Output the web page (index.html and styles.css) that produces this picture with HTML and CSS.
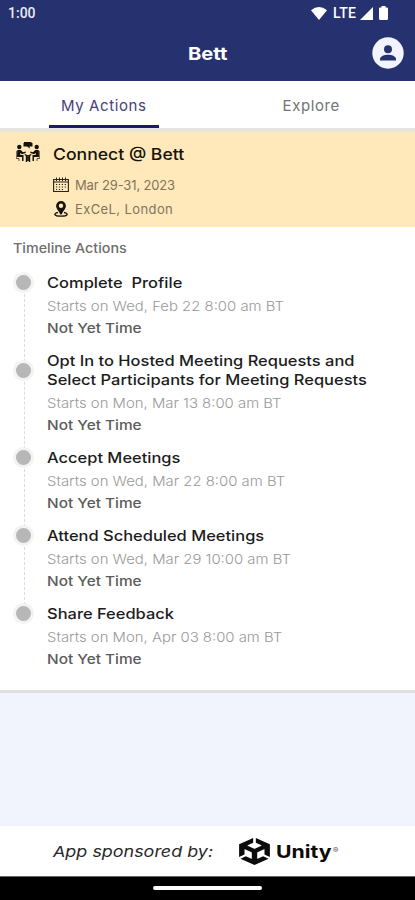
FILE: index.html
```html
<!DOCTYPE html>
<html lang="en">
<head>
<meta charset="utf-8">
<title>Bett</title>
<link rel="stylesheet" href="styles.css">
</head>
<body>
<div class="app">
  <header class="top">
    <div class="status">
      <span class="clock">1:00</span>
      <div class="signals">
        <svg width="16" height="13" viewBox="0 0 16 13"><path d="M0 3.2Q8-3 16 3.2L8 13Z" fill="#fff"/></svg>
        <span class="lte">LTE</span>
        <svg width="13" height="13" viewBox="0 0 13 13"><path d="M13 0V13H0Z" fill="#fff"/></svg>
        <svg class="battery" width="9" height="14" viewBox="0 0 9 14"><path d="M2.5 0H6.5V1.5H8Q9 1.5 9 2.7V12.7Q9 14 7.8 14H1.2Q0 14 0 12.7V2.7Q0 1.5 1 1.5H2.5Z" fill="#fff"/></svg>
      </div>
    </div>
    <div class="titlebar">
      <h1>Bett</h1>
      <svg class="avatar" width="32" height="32" viewBox="0 0 32 32"><circle cx="16" cy="16" r="15.7" fill="#f1f4fc"/><circle cx="16" cy="12.300" r="4" fill="#26326f"/><path d="M8 23.500V22C8 19.300 12.500 17.800 16 17.800S24 19.300 24 22V23.500Z" fill="#26326f"/></svg>
    </div>
  </header>
  <nav class="tabs">
    <div class="tab active"><span>My Actions</span></div>
    <div class="tab"><span>Explore</span></div>
  </nav>
  <section class="event">
    <svg class="people" width="24" height="21" viewBox="0 0 24 21" fill="#17130b">
      <path d="M8 0H15.500V1H16.500V4.500H13.500L14 6.500L11 4.500H7.500V1H8Z"/>
      <circle cx="3.300" cy="5" r="2.200"/><circle cx="20.700" cy="5" r="2.200"/>
      <path d="M1.200 8H4.800L7 10.300L9.700 9.500V11L6 12.300L4.300 11V13H7.500V19H6V15H1ZM22.800 8H19.200L17 10.300L14.300 9.500V11L18 12.300L19.700 11V13H16.500V19H18V15H23Z"/>
      <path d="M.3 9V16.500H3V19M23.700 9V16.500H21V19" fill="none" stroke="#17130b" stroke-width=".7"/>
      <path d="M8.700 12.500L10.500 13.500V20M15.300 12.500L13.500 13.500V20M12 13V19" fill="none" stroke="#17130b" stroke-width="1.400"/>
    </svg>
    <div class="event-info">
      <h2><span class="wide">Connect @ Bett</span></h2>
      <div class="meta">
        <svg width="16" height="16" viewBox="0 0 16 16" fill="none" stroke="#29231a"><path d="M.6 2.500H15.400V14.500H.6ZM.6 5H15.400" stroke-width="1.100"/><path d="M3.500.5V4M6.500.5V4M9.500.5V4M12.500.5V4"/><path d="M3 7.500H13.500M3 10H13.500M3 12.500H11.500" stroke-width="1.200" stroke-dasharray="1.200 1.700"/></svg>
        <span class="date">Mar 29-31, 2023</span>
      </div>
      <div class="meta">
        <svg width="16" height="16" viewBox="0 0 16 16"><path fill="#17130b" fill-rule="evenodd" d="M8 0A4.900 4.900 0 0 1 12.900 4.900C12.900 7.800 10 9.500 8.700 13.500H7.300C6 9.500 3.100 7.800 3.100 4.900A4.900 4.900 0 0 1 8 0ZM8 2.600A2.200 2.200 0 1 0 8 7A2.200 2.200 0 1 0 8 2.600Z"/><path d="M5 11.500C.2 12.300.5 15.200 8 15.200S15.800 12.300 11 11.500" fill="none" stroke="#17130b" stroke-width="1.300"/></svg>
        <span class="place">ExCeL, London</span>
      </div>
    </div>
  </section>
  <section class="timeline">
    <h3><span class="wide">Timeline Actions</span></h3>
    <ol>
      <li><i class="dot"></i><h4>Complete&nbsp; Profile</h4><p class="when">Starts on Wed, Feb 22 8:00 am BT</p><p class="state">Not Yet Time</p></li>
      <li><i class="dot"></i><h4>Opt In to Hosted Meeting Requests and<br>Select Participants for Meeting Requests</h4><p class="when">Starts on Mon, Mar 13 8:00 am BT</p><p class="state">Not Yet Time</p></li>
      <li><i class="dot"></i><h4>Accept Meetings</h4><p class="when">Starts on Wed, Mar 22 8:00 am BT</p><p class="state">Not Yet Time</p></li>
      <li><i class="dot"></i><h4>Attend Scheduled Meetings</h4><p class="when">Starts on Wed, Mar 29 10:00 am BT</p><p class="state">Not Yet Time</p></li>
      <li><i class="dot"></i><h4>Share Feedback</h4><p class="when">Starts on Mon, Apr 03 8:00 am BT</p><p class="state">Not Yet Time</p></li>
    </ol>
  </section>
  <footer class="sponsor">
    <div class="by"><span>App sponsored by:</span></div>
    <svg class="cube" width="31" height="27" viewBox="1.300 0 21.400 24" preserveAspectRatio="none"><path fill="#0b0b0b" d="m12.9288 4.2939 3.7997 2.1929c.1366.077.1415.2905 0 .3675l-4.515 2.6076a.4192.4192 0 0 1-.4246 0L7.274 6.8543c-.139-.0745-.1415-.293 0-.3675l3.7972-2.193V0L1.3758 5.5977V16.793l3.7177-2.1456v-4.3858c-.0025-.1565.1813-.2682.318-.1838l4.5148 2.6076a.4252.4252 0 0 1 .2136.3676v5.2127c.0025.1565-.1813.2682-.3179.1838l-3.7996-2.1929-3.7178 2.1457L12 24l9.6954-5.5977-3.7178-2.1457-3.7996 2.1929c-.1341.082-.3229-.0248-.3179-.1838V13.053c0-.1565.087-.2956.2136-.3676l4.5149-2.6076c.134-.082.3228.0224.3179.1838v4.3858l3.7177 2.1456V5.5977L12.9288 0Z"/></svg>
    <span class="unity">Unity</span><span class="reg">®</span>
  </footer>
  <div class="homebar"><i></i></div>
</div>
</body>
</html>
```
FILE: styles.css
```css
* { box-sizing: border-box; margin: 0; padding: 0; }
body { width: 415px; height: 900px; overflow: hidden; font-family: Inter, "Open Sans", sans-serif; }
.app { display: flex; flex-direction: column; height: 900px; background: #f2f4fd; }
svg { display: block; flex: none; }

.top { height: 81px; flex: none; background: #26326f; color: #fff; }
.status { display: flex; justify-content: space-between; height: 26px; padding: 0 27px 0 8px; align-items: center; }
.clock { font: 500 14px/26px Roboto, sans-serif; color: #e9ebf5; }
.signals { display: flex; align-items: center; }
.lte { font: 500 14px/24px Roboto, sans-serif; margin: 0 4px 0 6px; letter-spacing: .2px; }
.battery { margin-left: 6px; }
.titlebar { display: grid; grid-template-columns: 1fr auto 1fr; align-items: center; height: 55px; padding: 0 11px; }
.titlebar h1 { grid-column: 2; font-size: 18px; font-weight: 700; transform: scaleX(1.120); }
.avatar { justify-self: end; position: relative; top: -1px; }

.tabs { display: flex; height: 51px; flex: none; background: #fff; border-bottom: 4px solid #e7e5df; }
.tab { flex: 1; display: flex; justify-content: center; font-size: 15px; line-height: 49px; color: #737373; letter-spacing: .6px; }
.tab span { height: 47px; }
.active { color: #45417a; }
.active span { width: 110px; text-align: center; border-bottom: 3px solid #1d1964; }

.wide { display: inline-block; transform: scaleX(1.100); transform-origin: left; }
.event { display: flex; flex: none; height: 95px; background: #ffe9bb; padding: 10px 16px 0; }
.event-info { margin-left: 13px; }
.event h2 { font-size: 16px; line-height: 24px; font-weight: 550; color: #17130b; margin: 0 0 7px; }
.meta { display: flex; align-items: center; gap: 6px; height: 24px; font-size: 13px; color: #81745c; }
.date { letter-spacing: -.15px; }
.place { letter-spacing: .4px; }

.timeline { height: 466px; flex: none; background: #fff; border-bottom: 3px solid #dfe0e5; padding: 12px 13px 0; }
.timeline h3 { font-size: 13px; line-height: 18px; font-weight: 450; color: #6e6e6e; }
ol { list-style: none; margin-top: 17px; }
li { position: relative; padding: 0 0 13.200px 34px; }
li h4, .when, .state { width: fit-content; transform-origin: left; white-space: nowrap; }
li h4 { font-size: 14.500px; line-height: 18.500px; font-weight: 550; color: #1c1c1c; transform: scaleX(1.135); }
.when { margin-top: 2.500px; font-size: 13.500px; line-height: 22px; color: #999; font-weight: 300; transform: scaleX(1.102); }
.state { font-size: 13.500px; line-height: 22px; font-weight: 450; color: #5b5b5b; transform: scaleX(1.140); }
.dot { position: absolute; left: 0; top: -2px; width: 21px; height: 21px; border-radius: 50%; background: #b7b7b7; border: 3px solid #f3f3f3; z-index: 1; }
li:nth-child(2) .dot { top: 7.500px; }
li:not(:last-child)::before { content: ""; position: absolute; left: 10.500px; top: 10px; bottom: -10px; border-left: 1px dashed #dcdcdc; }

.sponsor { display: flex; align-items: center; height: 50px; flex: none; margin-top: auto; background: #fff; padding-left: 53px; }
.by { width: 186px; font-size: 15px; font-style: italic; color: #292929; white-space: nowrap; }
.by span { display: inline-block; transform: scaleX(1.195); transform-origin: left; }
.unity { font-size: 18px; font-weight: 700; width: 56px; margin-left: 6px; color: #0b0b0b; transform: scaleX(1.180); transform-origin: left; }
.reg { font-size: 8px; color: #555; margin-left: 1px; margin-top: -2px; }
.homebar { height: 24px; flex: none; background: #000; border-top: 1px solid #666; display: flex; justify-content: center; padding-top: 9px; }
.homebar i { width: 109px; height: 4px; border-radius: 2px; background: #fff; }
```
